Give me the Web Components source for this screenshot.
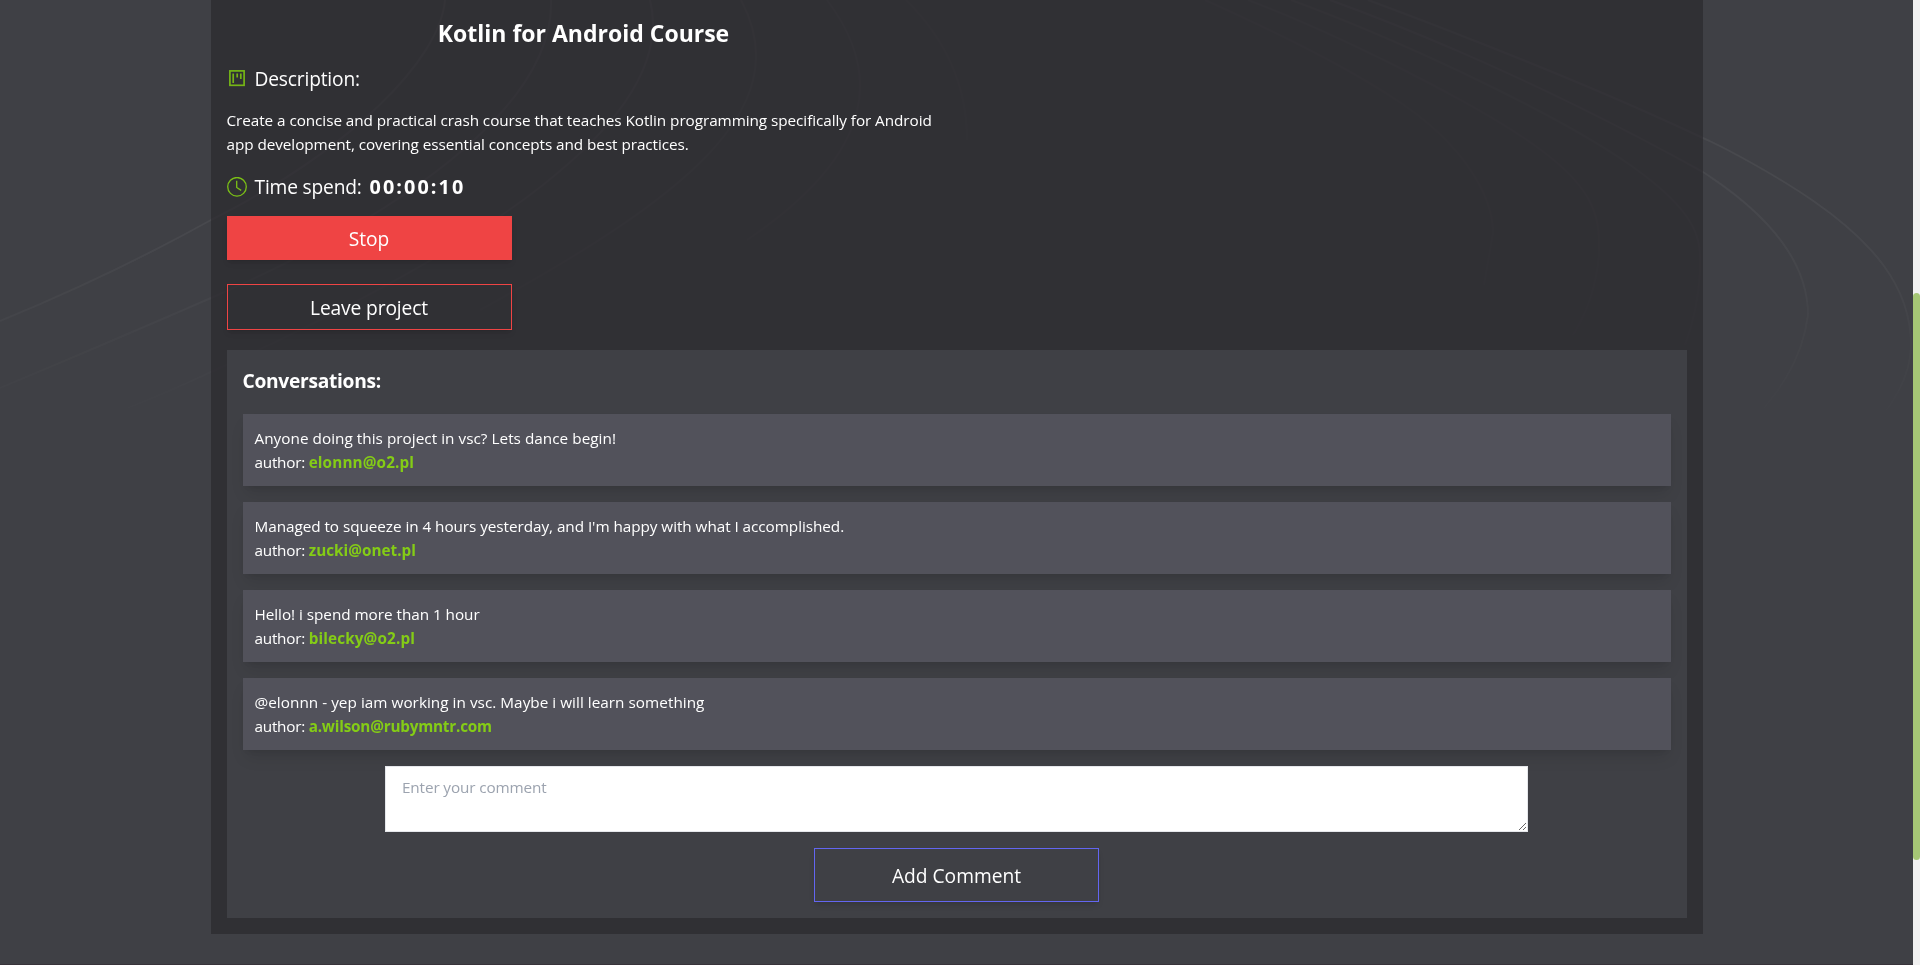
<!DOCTYPE html>
<html lang="en"><head><meta charset="utf-8"><title>Kotlin for Android Course</title>
<style>html,body{margin:0;height:100%;overflow:hidden}body{font-family:"Open Sans","Segoe UI",sans-serif;color:#fff;background:#3f4045}</style></head>
<body><project-page></project-page>
<script>
const define=(name,html,setup)=>customElements.define(name,class extends HTMLElement{
  constructor(){super();const t=document.createElement('template');t.innerHTML=html;this.attachShadow({mode:'open'}).append(t.content.cloneNode(true));}
  connectedCallback(){if(setup)setup(this,this.shadowRoot);}
});

// Fixed decorative line art behind the page content
define('line-backdrop',`<style>:host{position:absolute;inset:0;display:block;z-index:0;pointer-events:none}svg{display:block;width:100%;height:100%}path{fill:none;stroke:#fff;stroke-width:2}</style>
<svg viewBox="0 0 1920 965" preserveAspectRatio="none">
<defs><linearGradient id="f" x1="0" y1="0" x2="0" y2="440" gradientUnits="userSpaceOnUse"><stop offset="0" stop-color="#fff"/><stop offset=".5" stop-color="#fff" stop-opacity=".8"/><stop offset="1" stop-color="#fff" stop-opacity="0"/></linearGradient><mask id="m"><rect width="1920" height="965" fill="url(#f)"/></mask></defs>
<g mask="url(#m)">
<path opacity=".06" d="M445 0C440 60 350 150 211 220Q110 276 0 321"/>
<path opacity=".055" d="M551 0C555 110 390 220 211 298Q110 342 0 388"/>
<path opacity=".05" d="M650 0C680 120 480 250 211 372Q130 410 60 432"/>
<path opacity=".04" d="M741 0C800 110 680 200 480 310"/>
<path opacity=".03" d="M827 0C880 70 880 150 747 240"/>
<path opacity=".022" d="M906 0Q967 60 967 140"/>
<path opacity=".055" d="M1368 0Q1572 76 1703 138C1730 150 1780 178 1812 200C1870 240 1911 285 1911 345Q1911 390 1860 441"/>
<path opacity=".05" d="M1330 0Q1511 66 1703 172C1765 212 1808 260 1808 315Q1800 380 1736 436"/>
<path opacity=".04" d="M1291 0C1400 40 1560 115 1633 167S1700 245 1700 272Q1698 310 1685 345"/>
<path opacity=".033" d="M1248 0C1340 35 1480 105 1541 150S1599 225 1599 255Q1595 300 1573 335"/>
<path opacity=".027" d="M1205 0C1260 25 1340 62 1401 103S1493 195 1493 233L1484 285"/>
</g></svg>`);

define('page-scrollbar',`<style>:host{display:flow-root;width:7px;height:100%;background:#f1f1f1;flex:none}div{height:567px;margin-top:293px;background:#a5c675;border-radius:5px}</style><div></div>`);

define('action-button',`<style>:host{display:block;width:285px}button{display:block;width:100%;height:var(--h,44px);box-sizing:border-box;margin:0;padding:2px 0 0;font:19.2px/28px "Open Sans",sans-serif;color:#fff;background:var(--bg,transparent);border:1px solid var(--line);letter-spacing:var(--ls,0);box-shadow:0 4px 6px -1px rgba(0,0,0,.1),0 2px 4px -2px rgba(0,0,0,.1)}</style><button><slot></slot></button>`);

define('info-row',`<style>:host{display:flex;align-items:center;gap:7px;height:28px;font-size:19.2px;line-height:28px;white-space:pre;letter-spacing:-.18px}::slotted(svg){flex:none}</style><slot name="icon"></slot><span><slot></slot></span>`);

define('comment-card',`<style>:host{display:block;box-sizing:border-box;height:72px;padding:12px;background:#52525b;box-shadow:0 10px 15px -3px rgba(0,0,0,.1),0 4px 6px -4px rgba(0,0,0,.1);font-size:15.3px;line-height:24px}p{margin:0}p+p{letter-spacing:-.25px}b{color:#84cc16;font-weight:700;letter-spacing:var(--bs,.12px)}</style><p><slot></slot></p><p>author: <b></b></p>`,
(h,r)=>{r.querySelector('b').textContent=h.getAttribute('author');});

define('comment-form',`<style>:host{display:flex;flex-direction:column;align-items:center;gap:16px}textarea{display:block;box-sizing:border-box;width:1143px;height:66px;margin:0;padding:8px 16px;border:1px solid #e5e7eb;border-radius:0;background:#fff;color:#333;font:15.3px/24px "Open Sans",sans-serif;letter-spacing:-.13px;resize:both;overflow:auto}textarea::placeholder{color:#9ca3af;opacity:1}action-button{--h:54px;--line:#6366f1}</style>
<textarea placeholder="Enter your comment"></textarea><action-button>Add Comment</action-button>`);

define('conversation-panel',`<style>:host{display:flex;flex-direction:column;gap:16px;box-sizing:border-box;height:568px;padding:16px;background:#3f4045}h2{margin:0 0 4px;height:28px;font-size:19.2px;line-height:30px;font-weight:700;letter-spacing:-.29px}.l{display:flex;flex-direction:column;gap:16px}</style><h2>Conversations:</h2><div class="l"><slot></slot></div><comment-form></comment-form>`);

define('project-page',`<style>:host{display:flex;position:relative;width:100%;height:965px;overflow:hidden}
main{flex:1;display:flex;justify-content:center;align-items:flex-start;box-sizing:border-box;border-bottom:1px solid #38333a}
article{position:relative;width:1492px;height:934px;box-sizing:border-box;padding:17px 16px 16px;background:rgba(43,41,46,.7)}
.about{width:714px}h1{margin:0 0 16px;text-align:center;font-size:23px;line-height:32px;font-weight:700}
p{margin:15px 0 17px;font-size:15.3px;line-height:24px;letter-spacing:-.065px}
.time{font-size:19.8px;letter-spacing:2.1px;margin-left:3px}action-button{--line:#ef4444}.stop{--bg:#ef4444;margin:15px 0 24px}.leave{--h:46px;--ls:-.12px;margin-bottom:20px}page-scrollbar{position:relative}</style>
<line-backdrop></line-backdrop>
<main><article>
<div class="about"><h1>Kotlin for Android Course</h1>
<info-row><svg slot="icon" width="21" height="21" viewBox="0 0 21 21" fill="none" stroke="#76b516"><rect x="2.9" y="1.9" width="14.2" height="14.4" stroke-width="1.7"/><path d="M6.2 4.5v9.5M10.2 4.5v4M13.8 4.5v5.5" stroke-width="1.7"/></svg>Description:</info-row>
<p>Create a concise and practical crash course that teaches Kotlin programming specifically for Android app development, covering essential concepts and best practices.</p>
<info-row><svg slot="icon" width="21" height="21" viewBox="0 0 21 21" fill="none" stroke="#7bc016" stroke-width="1.3"><circle cx="10" cy="9.8" r="9.3"/><path d="M9.7 3.8v6.7l4.5 2.9"/></svg>Time spend: <b class="time">00:00:10</b></info-row></div>
<action-button class="stop">Stop</action-button>
<action-button class="leave">Leave project</action-button>
<conversation-panel>
<comment-card author="elonnn@o2.pl" style="letter-spacing:.03px">Anyone doing this project in vsc? Lets dance begin!</comment-card>
<comment-card author="zucki@onet.pl" style="letter-spacing:-.055px;--bs:0px">Managed to squeeze in 4 hours yesterday, and I'm happy with what I accomplished.</comment-card>
<comment-card author="bilecky@o2.pl" style="letter-spacing:-.04px">Hello! i spend more than 1 hour</comment-card>
<comment-card author="a.wilson@rubymntr.com" style="letter-spacing:.03px;--bs:-.21px">@elonnn - yep iam working in vsc. Maybe i will learn something</comment-card>
</conversation-panel>
</article></main><page-scrollbar></page-scrollbar>`);
</script></body></html>
